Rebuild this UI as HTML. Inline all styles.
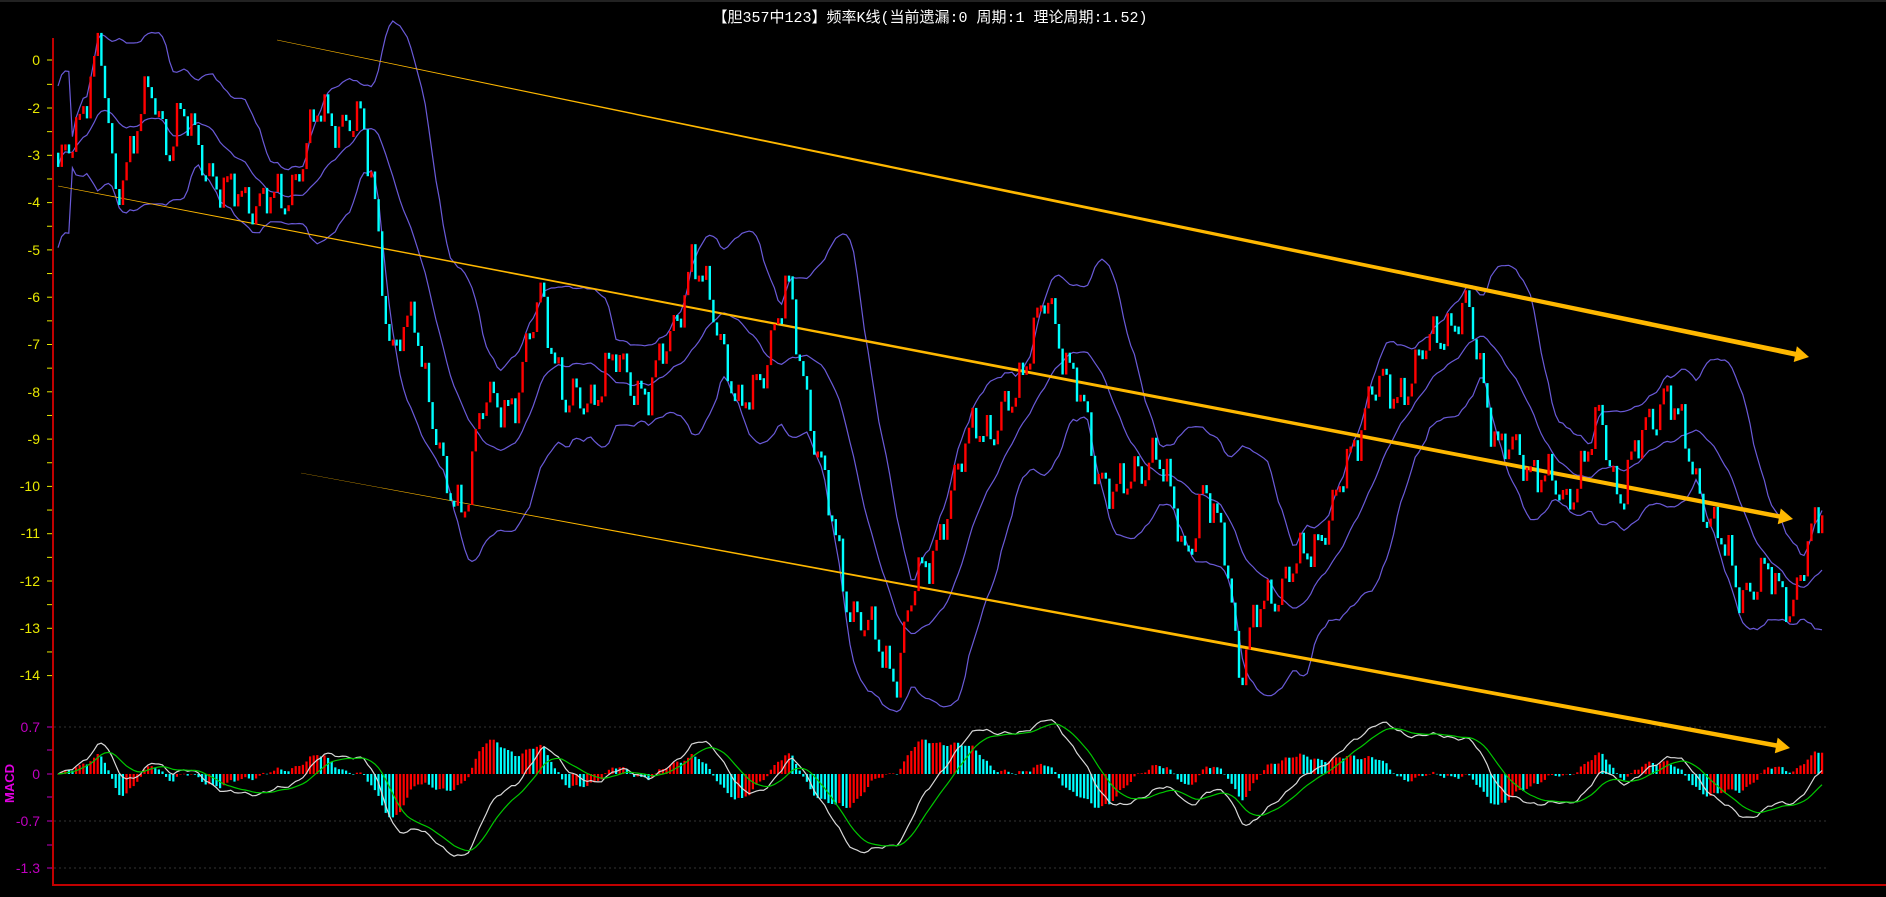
<!DOCTYPE html>
<html><head><meta charset="utf-8">
<style>
html,body{margin:0;padding:0;background:#000;width:1886px;height:897px;overflow:hidden}
svg{display:block}
text{font-family:"Liberation Sans","Noto Sans CJK SC",sans-serif}
</style></head>
<body>
<svg id="s" width="1886" height="897" xmlns="http://www.w3.org/2000/svg">
<rect x="0" y="0" width="1886" height="897" fill="#000"/>
<rect x="0" y="0" width="1886" height="2" fill="#222"/>
<text x="930" y="22" fill="#ffffff" font-size="15" text-anchor="middle" style="font-family:'Liberation Mono','Noto Sans CJK SC',monospace">【胆357中123】频率K线(当前遗漏:0 周期:1 理论周期:1.52)</text>
<g fill="#e8e800" font-size="14" text-anchor="end">
<text x="40" y="65">0</text>
<text x="40" y="113">-2</text>
<text x="40" y="160">-3</text>
<text x="40" y="207">-4</text>
<text x="40" y="255">-5</text>
<text x="40" y="302">-6</text>
<text x="40" y="349">-7</text>
<text x="40" y="397">-8</text>
<text x="40" y="444">-9</text>
<text x="40" y="491">-10</text>
<text x="40" y="538">-11</text>
<text x="40" y="586">-12</text>
<text x="40" y="633">-13</text>
<text x="40" y="680">-14</text>
</g>
<g fill="#c000c0" font-size="14" text-anchor="end">
<text x="40" y="732">0.7</text>
<text x="40" y="779">0</text>
<text x="40" y="826">-0.7</text>
<text x="40" y="873">-1.3</text>
</g>
<text x="0" y="0" fill="#e000e0" font-size="13" font-weight="bold" transform="translate(14,803) rotate(-90)">MACD</text>
<g stroke="#333" stroke-dasharray="2,3" stroke-width="1">
<line x1="54" y1="727" x2="1826" y2="727"/>
<line x1="54" y1="821" x2="1826" y2="821"/>
<line x1="54" y1="868" x2="1826" y2="868"/>
</g>
<g id="ticks" stroke="#e8e800" stroke-width="1"></g>
<g id="chart"></g>
<line x1="53" y1="38" x2="53" y2="886" stroke="#c00000" stroke-width="2"/>
<line x1="53" y1="885" x2="1886" y2="885" stroke="#c00000" stroke-width="2"/>
</svg>
<script>
(function(){
var NS="http://www.w3.org/2000/svg";
var chart=document.getElementById('chart');
var ticks=document.getElementById('ticks');
function el(t,a,p){var e=document.createElementNS(NS,t);for(var k in a)e.setAttribute(k,a[k]);(p||chart).appendChild(e);return e;}
for(var v=0;v>=-14;v-=0.5){var y=108+(-2-v)*47.3;if(v===0)y=60;if(v===-0.5||v===-1)continue;el('line',{x1:47,y1:y,x2:52,y2:y},ticks);}
[727,774,821,868,750,797,845].forEach(function(y){el('line',{x1:47,y1:y,x2:52,y2:y,stroke:'#c000c0'},ticks);});
var K=[[48,150],[83,40],[95,160],[125,75],[140,120],[150,95],[185,160],[235,170],[265,95],[300,105],[310,150],[325,300],[345,260],[370,410],[385,420],[400,340],[430,330],[450,240],[470,340],[490,330],[510,300],[540,330],[575,220],[595,260],[615,350],[635,300],[655,240],[680,380],[705,500],[745,560],[760,490],[790,420],[810,340],[825,370],[870,250],[895,320],[910,390],[935,410],[960,370],[985,460],[1000,410],[1020,460],[1030,560],[1050,500],[1080,470],[1110,420],[1140,320],[1160,330],[1200,270],[1220,260],[1245,370],[1280,390],[1300,420],[1330,350],[1345,410],[1385,320],[1410,400],[1445,490],[1470,480],[1490,500],[1515,420]];
K=K.map(function(p){return [p[0]*1.203,p[1]*1.203];});
function interp(x){if(x<=K[0][0])return K[0][1];for(var i=1;i<K.length;i++){if(x<=K[i][0]){var a=K[i-1],b=K[i];return a[1]+(b[1]-a[1])*(x-a[0])/(b[0]-a[0]);}}return K[K.length-1][1];}
function toV(y){return (108-y)/47.3-2;}
function toY(v){return 108+(-2-v)*47.3;}
var xs=[],c=[];
for(var x=58;x<=1824;x+=3.6){var i=xs.length;xs.push(x);var t=toV(interp(x));t+=0.32*Math.sin(i*1.37)+0.22*Math.sin(i*0.53+1.3)+0.15*Math.sin(i*2.9+0.4);c.push(t);}
var N=c.length;
var P=20,mid=[],up=[],lo=[];
for(var i=0;i<N;i++){var s=Math.max(0,i-P+1),n=i-s+1,m=0;for(var j=s;j<=i;j++)m+=c[j];m/=n;var sd=0;for(var j=s;j<=i;j++)sd+=(c[j]-m)*(c[j]-m);sd=Math.sqrt(sd/n);if(n<5)sd=Math.max(sd,0.9);mid.push(m);up.push(m+1.9*sd);lo.push(m-1.9*sd);}
function pl(arr,col){var d='';for(var i=0;i<N;i++)d+=(i?'L':'M')+xs[i].toFixed(1)+' '+toY(arr[i]).toFixed(1);el('path',{d:d,fill:'none',stroke:col,'stroke-width':1.2});}
pl(up,'#6a5ad8');pl(mid,'#6a5ad8');pl(lo,'#6a5ad8');
function chan(x1,y1,x2,y2,w0,w1){var dx=x2-x1,dy=y2-y1,L=Math.sqrt(dx*dx+dy*dy),ux=dx/L,uy=dy/L,nx=-uy,ny=ux;
 var ex=x2-ux*14,ey=y2-uy*14;
 var pts=[[x1+nx*w0/2,y1+ny*w0/2],[ex+nx*w1/2,ey+ny*w1/2],[ex+nx*8,ey+ny*8],[x2,y2],[ex-nx*8,ey-ny*8],[ex-nx*w1/2,ey-ny*w1/2],[x1-nx*w0/2,y1-ny*w0/2]];
 el('polygon',{points:pts.map(function(p){return p[0].toFixed(1)+','+p[1].toFixed(1);}).join(' '),fill:'#ffb800'});}
chan(277,40,1809,357,0.4,5);
chan(58,186,1793,519,0.6,4.5);
chan(301,473,1790,748,0.3,4.5);
for(var i=0;i<N;i++){var o=i?c[i-1]:c[0]+0.3,cl=c[i];var y1=toY(Math.max(o,cl)),y2=toY(Math.min(o,cl));if(y2-y1<6){y2=y1+6;}
 el('rect',{x:(xs[i]-1).toFixed(1),y:y1.toFixed(1),width:2.4,height:(y2-y1).toFixed(1),fill:cl>=o?'#ff0000':'#00ffff'});}
function ema(a,n){var k=2/(n+1),r=[a[0]];for(var i=1;i<a.length;i++)r.push(r[i-1]+k*(a[i]-r[i-1]));return r;}
var e1=ema(c,12),e2=ema(c,26),dif=[];for(var i=0;i<N;i++)dif.push(e1[i]-e2[i]);
var dea=ema(dif,9);
var sc=0.8;
function my2(v){var y=774-v*sc*67;return Math.max(700,Math.min(884,y));}
var prev=0;
for(var i=0;i<N;i++){var h=(dif[i]-dea[i])*1.5;var y=my2(h);var col=h>=prev?'#ff0000':'#00ffff';prev=h;
 el('rect',{x:(xs[i]-1).toFixed(1),y:Math.min(y,774).toFixed(1),width:2.2,height:Math.max(0.5,Math.abs(y-774)).toFixed(1),fill:col});}
function mpl(arr,col){var d='';for(var i=0;i<N;i++)d+=(i?'L':'M')+xs[i].toFixed(1)+' '+my2(arr[i]).toFixed(1);el('path',{d:d,fill:'none',stroke:col,'stroke-width':1.2});}
mpl(dif,'#d8d8d8');mpl(dea,'#00c800');
})();
</script>
</body></html>
